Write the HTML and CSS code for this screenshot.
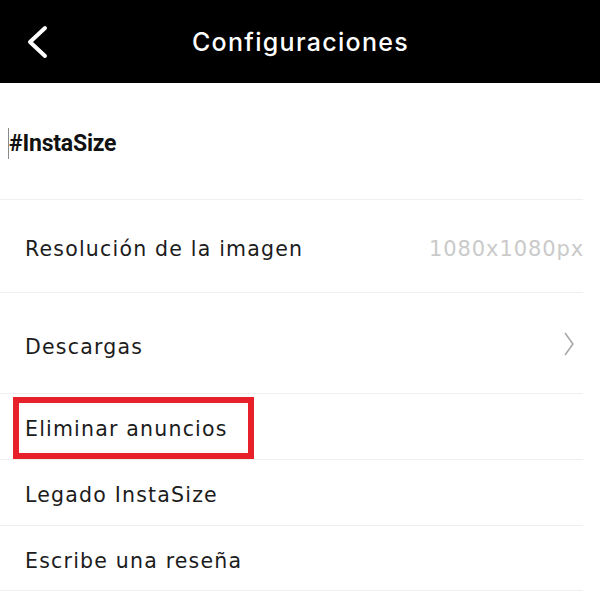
FILE: index.html
```html
<!DOCTYPE html>
<html lang="es">
<head>
<meta charset="utf-8">
<title>Configuraciones</title>
<link rel="stylesheet" href="styles.css">
</head>
<body>
<header class="topbar">
  <div class="back">
    <svg class="back-icon" width="24" height="34" viewBox="0 0 24 34">
      <polyline points="19,3 4,17 19,31" fill="none" stroke="#fff" stroke-width="4" stroke-linecap="round" stroke-linejoin="round"/>
    </svg>
  </div>
  <h1 class="title">Configuraciones</h1>
  <div></div>
</header>
<main class="list">
  <div class="row row-tag">
    <span class="caret"></span><span class="tag">#InstaSize</span>
  </div>
  <div class="row row-res">
    <span class="label">Resolución de la imagen</span>
    <span class="value">1080x1080px</span>
  </div>
  <div class="row row-dl">
    <span class="label">Descargas</span>
    <svg class="chev" width="12" height="24" viewBox="0 0 12 24">
      <polyline points="2,1 10,12 2,23" fill="none" stroke="#a8a8a8" stroke-width="1.6" stroke-linejoin="round"/>
    </svg>
  </div>
  <div class="row row-small">
    <span class="label boxed">Eliminar anuncios</span>
  </div>
  <div class="row row-small">
    <span class="label">Legado InstaSize</span>
  </div>
  <div class="row row-small row-last">
    <span class="label">Escribe una reseña</span>
  </div>
</main>
</body>
</html>
```
FILE: styles.css
```css
* { box-sizing: border-box; }
html, body { margin: 0; padding: 0; background: #fff; }
body { width: 600px; height: 592px; overflow: hidden; font-family: "DejaVu Sans", "Inter", sans-serif; }

.topbar {
  height: 83px;
  background: #000;
  display: grid;
  grid-template-columns: 1fr auto 1fr;
  align-items: center;
}
.back { padding-left: 26px; display: flex; align-items: center; }
.back-icon { display: block; }
.title {
  margin: 0 0 0 1px;
  font-family: "Inter", sans-serif;
  color: #fff;
  font-size: 25px;
  font-weight: 500;
  letter-spacing: 1.3px;
}

.list { margin-right: 17px; }
.row {
  display: flex;
  align-items: center;
  justify-content: space-between;
  border-bottom: 1px solid #efefef;
  padding-left: 25px;
}
.row-tag { height: 117px; padding-left: 8px; padding-top: 4px; justify-content: flex-start; }
.row-res { height: 93px; padding-top: 6px; }
.row-dl { height: 101px; padding-top: 7px; }
.row-small { height: 66px; padding-top: 5px; }
.row-last { height: 65px; }

.caret { width: 1px; height: 31px; background: #8a8a8a; }
.tag {
  font-family: "Roboto", sans-serif;
  font-weight: 700;
  font-size: 23px;
  color: #111;
  letter-spacing: -0.2px;
}
.label {
  font-size: 20.5px;
  color: #1c1c1c;
  letter-spacing: 1.2px;
}
.value {
  font-size: 21px;
  color: #cacaca;
  letter-spacing: 0.9px;
  margin-right: -1px;
}
.chev { display: block; margin-right: 8px; margin-top: -6px; }

.boxed {
  position: relative;
}
.boxed::before {
  content: "";
  position: absolute;
  box-sizing: border-box;
  left: -12px;
  top: -20px;
  width: 241px;
  height: 62px;
  border: 6px solid #e8202a;
}
```
